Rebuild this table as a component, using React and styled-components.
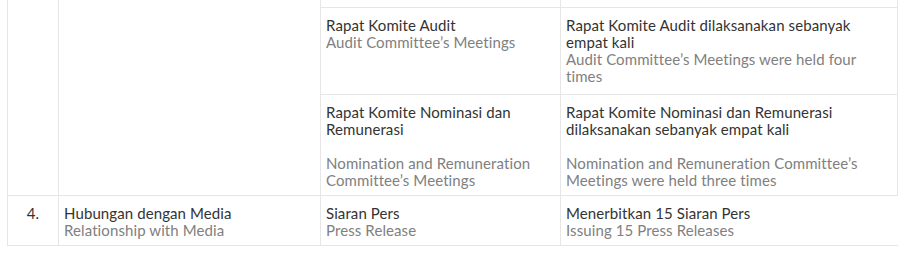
import React from "react";
import styled, { createGlobalStyle } from "styled-components";

const Global = createGlobalStyle`
  html, body { margin: 0; padding: 0; background: #fff; }
  body { font-family: Lato, "Open Sans", sans-serif; }
`;

const Wrap = styled.div`
  padding: 0 0 0 7px;
  width: 890px;
`;

const Table = styled.table`
  border-collapse: collapse;
  width: 890px;
  table-layout: fixed;
  font-size: 15px;
  letter-spacing: 0.1px;
  line-height: 17px;
  color: #333;
`;

const Cell = styled.td`
  border: 1px solid #e6e6e6;
  border-top: ${(p) => (p.$noTop ? "none" : "1px solid #e6e6e6")};
  border-right: ${(p) => (p.$noRight ? "none" : "1px solid #e6e6e6")};
  vertical-align: top;
  padding: ${(p) => (p.$empty ? "0" : "9px 5px 6px 5px")};
  text-align: ${(p) => (p.$center ? "center" : "left")};
  height: ${(p) => p.$h || "auto"};
  box-sizing: border-box;
`;

const Id = styled.div`
  color: #333;
`;

const En = styled.div`
  color: #808080;
`;

const Gap = styled.div`
  height: 17px;
`;

const Row = styled.tr``;

export default function App() {
  return (
    <>
      <Global />
      <Wrap>
        <Table>
          <colgroup>
            <col style={{ width: 51 }} />
            <col style={{ width: 262 }} />
            <col style={{ width: 240 }} />
            <col style={{ width: 337 }} />
          </colgroup>
          <tbody>
            <Row>
              <Cell $noTop $empty rowSpan={3} />
              <Cell $noTop $empty rowSpan={3} />
              <Cell $noTop $empty $h="7px" />
              <Cell $noTop $empty $h="7px" />
            </Row>
            <Row>
              <Cell $h="87px">
                <Id>Rapat Komite Audit</Id>
                <En>Audit Committee’s Meetings</En>
              </Cell>
              <Cell $h="87px">
                <Id>Rapat Komite Audit dilaksanakan sebanyak empat kali</Id>
                <En>Audit Committee’s Meetings were held four times</En>
              </Cell>
            </Row>
            <Row>
              <Cell $h="101px">
                <Id>Rapat Komite Nominasi dan Remunerasi</Id>
                <Gap />
                <En>Nomination and Remuneration Committee’s Meetings</En>
              </Cell>
              <Cell $h="101px">
                <Id>Rapat Komite Nominasi dan Remunerasi dilaksanakan sebanyak empat kali</Id>
                <Gap />
                <En>Nomination and Remuneration Committee’s Meetings were held three times</En>
              </Cell>
            </Row>
            <Row>
              <Cell $center $h="50px">4.</Cell>
              <Cell $h="50px">
                <Id>Hubungan dengan Media</Id>
                <En>Relationship with Media</En>
              </Cell>
              <Cell $h="50px">
                <Id>Siaran Pers</Id>
                <En>Press Release</En>
              </Cell>
              <Cell $noRight $h="50px">
                <Id>Menerbitkan 15 Siaran Pers</Id>
                <En>Issuing 15 Press Releases</En>
              </Cell>
            </Row>
          </tbody>
        </Table>
      </Wrap>
    </>
  );
}
